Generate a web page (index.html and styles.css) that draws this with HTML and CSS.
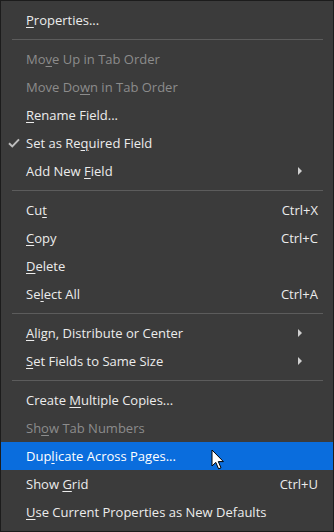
FILE: index.html
```html
<!DOCTYPE html>
<html lang="en">
<head>
  <meta charset="UTF-8">
  <title>Context menu</title>
  <link rel="stylesheet" href="styles.css">
</head>
<body>

  <div class="menu">
    <div class="item"><span class="check"></span><span class="label"><u>P</u>roperties...</span></div>
    <div class="sep"></div>
    <div class="item disabled"><span class="check"></span><span class="label">Mo<u>v</u>e Up in Tab Order</span></div>
    <div class="item disabled"><span class="check"></span><span class="label">Move Do<u>w</u>n in Tab Order</span></div>
    <div class="item"><span class="check"></span><span class="label"><u>R</u>ename Field...</span></div>
    <div class="item">
      <span class="check">
        <svg width="12" height="10" viewBox="0 0 12 10"><path d="M1 5.2 L4.3 8.4 L11 1.4" fill="none" stroke="#bdbdbd" stroke-width="2"/></svg>
      </span>
      <span class="label">Set as Re<u>q</u>uired Field</span>
    </div>
    <div class="item"><span class="check"></span><span class="label">Add New <u>F</u>ield</span><span class="arrow"></span></div>
    <div class="sep"></div>
    <div class="item"><span class="check"></span><span class="label">Cu<u>t</u></span><span class="key">Ctrl+X</span></div>
    <div class="item"><span class="check"></span><span class="label"><u>C</u>opy</span><span class="key">Ctrl+C</span></div>
    <div class="item"><span class="check"></span><span class="label"><u>D</u>elete</span></div>
    <div class="item"><span class="check"></span><span class="label">Se<u>l</u>ect All</span><span class="key">Ctrl+A</span></div>
    <div class="sep"></div>
    <div class="item"><span class="check"></span><span class="label"><u>A</u>lign, Distribute or Center</span><span class="arrow"></span></div>
    <div class="item"><span class="check"></span><span class="label"><u>S</u>et Fields to Same Size</span><span class="arrow"></span></div>
    <div class="sep"></div>
    <div class="item"><span class="check"></span><span class="label">Create <u>M</u>ultiple Copies...</span></div>
    <div class="item disabled"><span class="check"></span><span class="label">Sh<u>o</u>w Tab Numbers</span></div>
    <div class="item active">
      <span class="check"></span><span class="label">Dup<u>l</u>icate Across Pages...</span>
      <svg class="cursor" width="14" height="22" viewBox="0 0 14 22"><path d="M1 1 L1 17 L4.8 13.4 L7.6 19.8 L10 18.8 L7.3 12.6 L12.4 12.6 Z" fill="#fff" stroke="#000" stroke-width="1" stroke-linejoin="round"/></svg>
    </div>
    <div class="item"><span class="check"></span><span class="label">Show <u>G</u>rid</span><span class="key">Ctrl+U</span></div>
    <div class="item"><span class="check"></span><span class="label"><u>U</u>se Current Properties as New Defaults</span></div>
  </div>

</body>
</html>
```

FILE: styles.css
```css
* { box-sizing: border-box; }

body {
  margin: 0;
  background: #3b3b3b;
  font-family: 'Open Sans', 'Noto Sans', sans-serif;
  font-size: 13px;
  color: #ececec;
}

.menu {
  width: 334px;
  height: 532px;
  border: 1px solid #1c1c1c;
  background: #3b3b3b;
  padding: 5px 0 5px;
  display: flex;
  flex-direction: column;
}

.item {
  position: relative;
  height: 28px;
  display: flex;
  align-items: center;
  flex-shrink: 0;
}

.item u {
  text-decoration-thickness: 1px;
  text-underline-offset: 2px;
}

.check {
  width: 25px;
  padding-left: 7px;
  display: flex;
  align-items: center;
}

.label {
  flex: 1;
  white-space: nowrap;
}

.key {
  padding-right: 15px;
}

.arrow {
  width: 0;
  height: 0;
  border-top: 4px solid transparent;
  border-bottom: 4px solid transparent;
  border-left: 4px solid #cfcfcf;
  margin-right: 31px;
}

.disabled {
  color: #8c8c8c;
}

.active {
  background: #0a6ddd;
  color: #ffffff;
}

.cursor {
  position: absolute;
  left: 210px;
  top: 7px;
}

.sep {
  height: 1px;
  background: #5c5c5c;
  margin: 5px 10px 5px 11px;
  flex-shrink: 0;
}
```
